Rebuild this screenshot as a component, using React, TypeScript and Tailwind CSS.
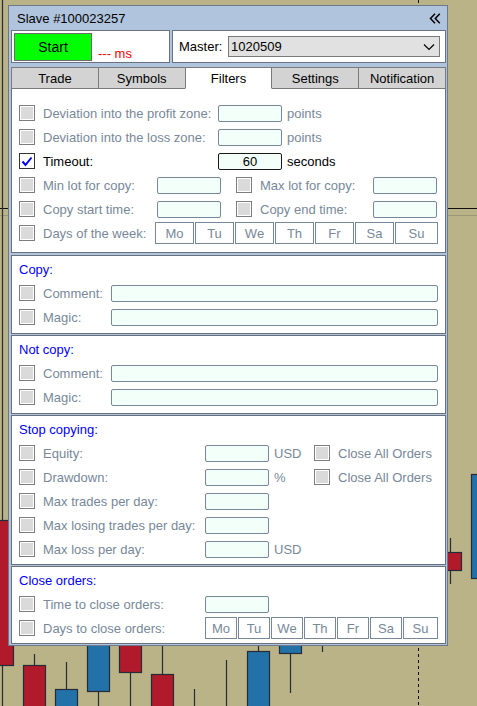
import React from 'react'

const font = "font-['Liberation_Sans',Arial,sans-serif]"

function Check({ checked }: { checked?: boolean }) {
  if (checked) {
    return (
      <div className="w-[16px] h-[16px] shrink-0 border border-[#333333] bg-white flex items-center justify-center">
        <svg width="12" height="11" viewBox="0 0 12 11">
          <path d="M1.5 5.5 L4.5 9 L10.5 1.5" fill="none" stroke="#0000ff" strokeWidth="2" />
        </svg>
      </div>
    )
  }
  return (
    <div className="w-[16px] h-[16px] shrink-0 border border-[#7d7d7d] bg-[#dadada] shadow-[inset_0_0_0_1px_#ffffff]" />
  )
}

function Field({ w, value, dark }: { w: string; value?: string; dark?: boolean }) {
  return (
    <div
      className={`${w} h-[17px] shrink-0 rounded-[2px] bg-[#f3fff9] border flex items-center justify-center text-[13px] text-black ${
        dark ? 'border-[#1a1a1a]' : 'border-[#778899]'
      }`}
    >
      {value}
    </div>
  )
}

function Days({ w, last, h }: { w: string; last: string; h: string }) {
  const days = ['Mo', 'Tu', 'We', 'Th', 'Fr', 'Sa', 'Su']
  return (
    <div className="flex gap-[1px]">
      {days.map((d, i) => (
        <div
          key={d}
          className={`${i === 6 ? last : w} ${h} border border-[#778899] bg-white flex items-center justify-center text-[13px] text-[#778899]`}
        >
          {d}
        </div>
      ))}
    </div>
  )
}

function Row({ children }: { children: React.ReactNode }) {
  return <div className="flex items-center h-[24px] pl-[7px]">{children}</div>
}

function Label({ w, children, dark }: { w?: string; children: React.ReactNode; dark?: boolean }) {
  return (
    <span className={`ml-[8px] ${w ?? ''} shrink-0 whitespace-nowrap ${dark ? 'text-black' : 'text-[#778899]'}`}>
      {children}
    </span>
  )
}

function Header({ children }: { children: React.ReactNode }) {
  return <div className="h-[24px] flex items-center pl-[7px] text-[#0000ff]">{children}</div>
}

function Chart() {
  const red = '#b11a2b'
  const blue = '#2371a9'
  const line = '#262b38'
  const candles: { c: number; top: number; bottom: number; wt: number; wb: number; col?: string }[] = [
    { c: 2, top: 520, bottom: 665, wt: 0, wb: 706, col: red },
    { c: 34, top: 665, bottom: 720, wt: 654, wb: 720, col: red },
    { c: 66, top: 689, bottom: 720, wt: 662, wb: 720, col: blue },
    { c: 98, top: 600, bottom: 691, wt: 600, wb: 706, col: blue },
    { c: 130, top: 600, bottom: 672, wt: 600, wb: 706, col: red },
    { c: 162, top: 674, bottom: 720, wt: 640, wb: 720, col: red },
    { c: 194, top: 0, bottom: 0, wt: 689, wb: 706 },
    { c: 226, top: 0, bottom: 0, wt: 660, wb: 706 },
    { c: 258, top: 651, bottom: 720, wt: 640, wb: 720, col: blue },
    { c: 290, top: 600, bottom: 653, wt: 600, wb: 693, col: blue },
    { c: 322, top: 0, bottom: 0, wt: 640, wb: 652 },
    { c: 450, top: 552, bottom: 570, wt: 538, wb: 584, col: red },
    { c: 482, top: 474, bottom: 578, wt: 474, wb: 578, col: blue },
  ]
  return (
    <svg className="absolute inset-0" width="477" height="706" viewBox="0 0 477 706">
      <line x1="0" y1="208.5" x2="477" y2="208.5" stroke="#111111" strokeWidth="1" />
      <line x1="0" y1="215.5" x2="477" y2="215.5" stroke="#9d9872" strokeWidth="1" />
      <line x1="418.5" y1="0" x2="418.5" y2="706" stroke="#111111" strokeWidth="1" strokeDasharray="3 3" />
      {candles.map((k) => (
        <g key={k.c}>
          <line x1={k.c + 0.5} y1={k.wt} x2={k.c + 0.5} y2={k.wb} stroke={line} strokeWidth="1.2" />
          {k.col && (
            <rect
              x={k.c - 10.5}
              y={k.top + 0.5}
              width="22"
              height={k.bottom - k.top}
              fill={k.col}
              stroke={line}
              strokeWidth="1.2"
            />
          )}
        </g>
      ))}
    </svg>
  )
}

export default function App() {
  const tabs = ['Trade', 'Symbols', 'Filters', 'Settings', 'Notification']
  const box = 'border border-[#69717e] bg-white'

  return (
    <div className={`relative w-[477px] h-[706px] overflow-hidden bg-[#b9b387] ${font} text-[13px] leading-none`}>
      <Chart />

      {/* slave window */}
      <div className="absolute left-[8px] top-[5px] w-[440px] border border-[#6d7989] bg-[#b0c4de] pl-[2px] pr-[1px] pb-[1px]">
        <div className="h-[24px] flex items-center justify-between pl-[8px] pr-[6px] -ml-[2px] -mr-[1px]">
          <span className="text-black">Slave #100023257</span>
          <svg width="12" height="11" viewBox="0 0 12 11">
            <path d="M6 0.8 L1.5 5.5 L6 10.2 M10.8 0.8 L6.3 5.5 L10.8 10.2" fill="none" stroke="#000" strokeWidth="1.5" />
          </svg>
        </div>

        <div className="flex gap-[2px] h-[33px]">
          <div className={`${box} w-[159px] flex items-start pl-[2px] pt-[2px]`}>
            <div className="w-[78px] h-[28px] bg-[#00ff00] border border-[#6b6b6b] flex items-center justify-center text-[14px] text-black">
              Start
            </div>
            <span className="ml-[6px] mt-[14px] text-[#ff0000]">--- ms</span>
          </div>
          <div className={`${box} flex-1 flex items-center pl-[6px] pr-[5px]`}>
            <span className="text-black">Master:</span>
            <div className="ml-auto w-[212px] h-[21px] bg-[#e1e1e1] border border-[#7a7a7a] flex items-center justify-between pl-[2px] pr-[4px] text-black">
              <span>1020509</span>
              <svg width="12" height="8" viewBox="0 0 12 8">
                <path d="M1 1.5 L6 6.5 L11 1.5" fill="none" stroke="#000" strokeWidth="1.2" />
              </svg>
            </div>
          </div>
        </div>

        {/* tabs */}
        <div className="flex mt-[4px]">
          {tabs.map((t, i) => (
            <div
              key={t}
              className={`flex-1 h-[22px] border border-[#7b7b7b] flex items-center justify-center text-black ${
                i > 0 ? '-ml-[1px]' : ''
              } ${t === 'Filters' ? 'bg-white border-b-white relative z-10' : 'bg-[#d3d3d3]'}`}
            >
              {t}
            </div>
          ))}
        </div>

        {/* filters */}
        <div className={`${box} -mt-[1px] pt-[12px] pb-[7px]`}>
          <Row>
            <Check />
            <Label w="w-[175px]">Deviation into the profit zone:</Label>
            <Field w="w-[64px]" />
            <span className="ml-[5px] text-[#778899]">points</span>
          </Row>
          <Row>
            <Check />
            <Label w="w-[175px]">Deviation into the loss zone:</Label>
            <Field w="w-[64px]" />
            <span className="ml-[5px] text-[#778899]">points</span>
          </Row>
          <Row>
            <Check checked />
            <Label w="w-[175px]" dark>
              Timeout:
            </Label>
            <Field w="w-[64px]" value="60" dark />
            <span className="ml-[5px] text-black">seconds</span>
          </Row>
          <Row>
            <Check />
            <Label w="w-[114px]">Min lot for copy:</Label>
            <Field w="w-[64px]" />
            <div className="ml-[15px]" />
            <Check />
            <Label w="w-[113px]">Max lot for copy:</Label>
            <Field w="w-[64px]" />
          </Row>
          <Row>
            <Check />
            <Label w="w-[114px]">Copy start time:</Label>
            <Field w="w-[64px]" />
            <div className="ml-[15px]" />
            <Check />
            <Label w="w-[113px]">Copy end time:</Label>
            <Field w="w-[64px]" />
          </Row>
          <Row>
            <Check />
            <Label w="w-[112px]">Days of the week:</Label>
            <Days w="w-[39px]" last="w-[43px]" h="h-[22px]" />
          </Row>
        </div>

        {/* copy */}
        <div className={`${box} mt-[2px] pt-[1px] pb-[4px]`}>
          <Header>Copy:</Header>
          <Row>
            <Check />
            <Label w="w-[68px]">Comment:</Label>
            <Field w="w-[327px]" />
          </Row>
          <Row>
            <Check />
            <Label w="w-[68px]">Magic:</Label>
            <Field w="w-[327px]" />
          </Row>
        </div>

        {/* not copy */}
        <div className={`${box} mt-[1px] pt-[1px] pb-[4px]`}>
          <Header>Not copy:</Header>
          <Row>
            <Check />
            <Label w="w-[68px]">Comment:</Label>
            <Field w="w-[327px]" />
          </Row>
          <Row>
            <Check />
            <Label w="w-[68px]">Magic:</Label>
            <Field w="w-[327px]" />
          </Row>
        </div>

        {/* stop copying */}
        <div className={`${box} mt-[1px] pt-[1px] pb-[3px]`}>
          <Header>Stop copying:</Header>
          <Row>
            <Check />
            <Label w="w-[162px]">Equity:</Label>
            <Field w="w-[64px]" />
            <span className="ml-[5px] w-[40px] text-[#778899]">USD</span>
            <Check />
            <Label>Close All Orders</Label>
          </Row>
          <Row>
            <Check />
            <Label w="w-[162px]">Drawdown:</Label>
            <Field w="w-[64px]" />
            <span className="ml-[5px] w-[40px] text-[#778899]">%</span>
            <Check />
            <Label>Close All Orders</Label>
          </Row>
          <Row>
            <Check />
            <Label w="w-[162px]">Max trades per day:</Label>
            <Field w="w-[64px]" />
          </Row>
          <Row>
            <Check />
            <Label w="w-[162px]">Max losing trades per day:</Label>
            <Field w="w-[64px]" />
          </Row>
          <Row>
            <Check />
            <Label w="w-[162px]">Max loss per day:</Label>
            <Field w="w-[64px]" />
            <span className="ml-[5px] text-[#778899]">USD</span>
          </Row>
        </div>

        {/* close orders */}
        <div className={`${box} mt-[1px] pt-[1px] pb-[3px]`}>
          <Header>Close orders:</Header>
          <Row>
            <Check />
            <Label w="w-[162px]">Time to close orders:</Label>
            <Field w="w-[64px]" />
          </Row>
          <Row>
            <Check />
            <Label w="w-[162px]">Days to close orders:</Label>
            <Days w="w-[32px]" last="w-[35px]" h="h-[22px]" />
          </Row>
        </div>
      </div>
    </div>
  )
}
